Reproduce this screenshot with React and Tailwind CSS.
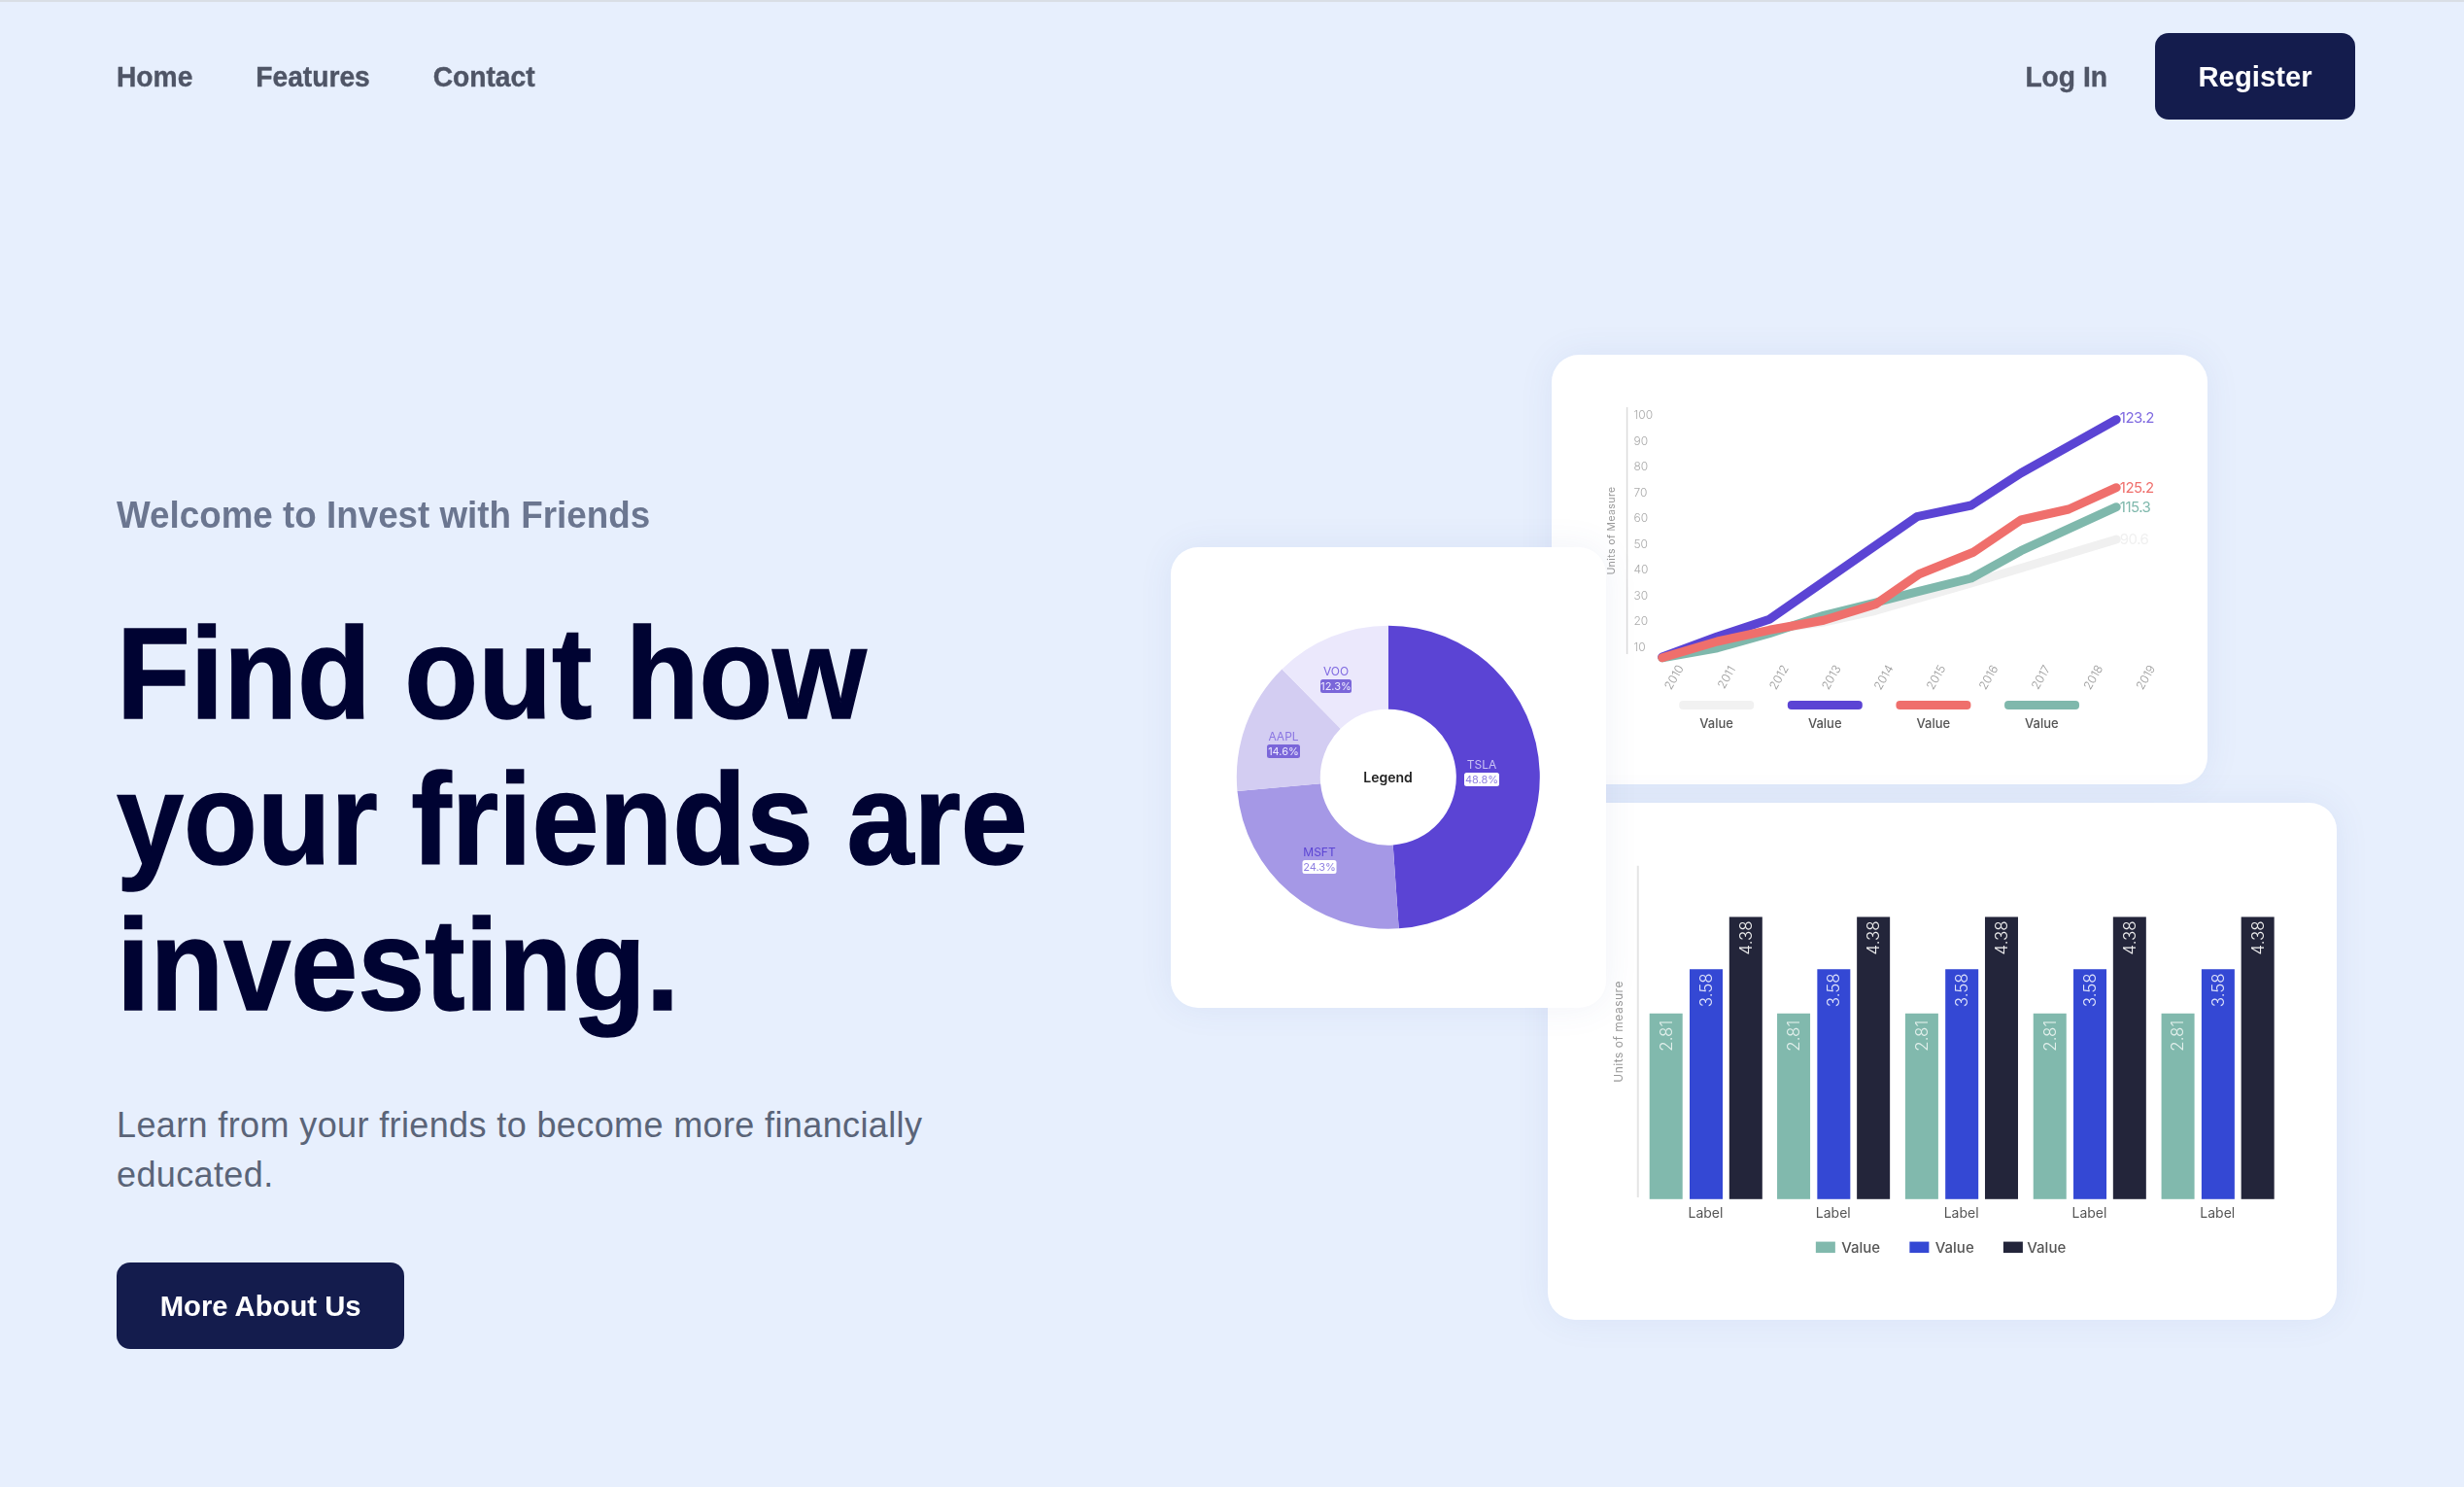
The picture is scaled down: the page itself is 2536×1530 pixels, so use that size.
import React from "react"

const sans = "font-['Liberation_Sans',Arial,sans-serif]"
const chartFont = "Inter, 'Noto Sans', sans-serif"

// line chart points are read from the reference crop, then mapped into card space
const lx = x => x / 2.24 - 17
const ly = y => y / 3 - 15
const linePts = pts => pts.map(([x, y]) => `${lx(x).toFixed(1)},${ly(y).toFixed(1)}`).join(" ")

const lines = [
    { color: "#f0f0f0", pts: [[293, 980], [420, 930], [540, 895], [665, 870], [785, 835], [1005, 750], [1340, 615]] },
    { color: "#7fb8ac", pts: [[293, 980], [420, 950], [540, 905], [665, 850], [785, 810], [885, 775], [1005, 735], [1120, 650], [1340, 515]] },
    { color: "#5b44d4", pts: [[293, 978], [420, 915], [540, 862], [880, 545], [1005, 510], [1120, 410], [1340, 245]] },
    { color: "#ef6f6c", pts: [[293, 980], [420, 930], [540, 895], [665, 865], [785, 815], [885, 722], [1010, 655], [1120, 555], [1230, 522], [1340, 455]] },
]

function LineChart() {
    const ticks = [100, 90, 80, 70, 60, 50, 40, 30, 20, 10]
    const years = [2010, 2011, 2012, 2013, 2014, 2015, 2016, 2017, 2018, 2019]
    const ends = [
        { t: "123.2", y: 240, c: "#7e68e0" },
        { t: "125.2", y: 455, c: "#ef6f6c" },
        { t: "115.3", y: 515, c: "#7fb8ac" },
        { t: "90.6", y: 615, c: "#f0f0f0" },
    ]
    const legend = [
        { x: 332, c: "#f1f1f1" },
        { x: 582, c: "#5b44d4" },
        { x: 832, c: "#ef6f6c" },
        { x: 1082, c: "#7fb8ac" },
    ]
    return (
        <svg viewBox="0 0 675 442" className="w-full h-full blur-[0.5px]" style={{ fontFamily: chartFont }}>
            <line x1="77.6" y1="54" x2="77.6" y2="308" stroke="#dcdcdc" strokeWidth="1.5" />
            {ticks.map((t, i) => (
                <text key={t} x="84.5" y={62.3 + i * 26.5 + 4} fontSize="12" fontWeight="300" fill="#aaa">{t}</text>
            ))}
            <text transform="translate(65 181) rotate(-90)" textAnchor="middle" fontSize="10.5" fill="#999" letterSpacing="0.4">Units of Measure</text>
            {lines.map(l => (
                <polyline key={l.color} points={linePts(l.pts)} fill="none" stroke={l.color} strokeWidth="9" strokeLinecap="round" strokeLinejoin="round" />
            ))}
            {ends.map(e => (
                <text key={e.t} x={lx(1348)} y={ly(e.y) + 5} fontSize="15" letterSpacing="-0.5" fill={e.c}>{e.t}</text>
            ))}
            {years.map((y, i) => (
                <text key={y} transform={`translate(${lx(322 + i * 120.8)} ${ly(1042)}) rotate(-60)`} textAnchor="middle" dominantBaseline="middle" fontSize="12" fontWeight="300" fill="#999">{y}</text>
            ))}
            {legend.map(l => (
                <g key={l.x}>
                    <rect x={lx(l.x)} y={ly(1113)} width="77" height="9" rx="4" fill={l.c} />
                    <text x={lx(l.x + 86)} y={ly(1182) + 5} textAnchor="middle" fontSize="13" fontWeight="500" fill="#555">Value</text>
                </g>
            ))}
        </svg>
    )
}

// donut slice between two clockwise angles measured from 12 o'clock
function slice(a0, a1, R, r) {
    const cx = 223.8, cy = 236.7
    const p = (a, rad) => {
        const t = (a * Math.PI) / 180
        return `${(cx + rad * Math.sin(t)).toFixed(2)} ${(cy - rad * Math.cos(t)).toFixed(2)}`
    }
    const big = a1 - a0 > 180 ? 1 : 0
    return `M${p(a0, R)} A${R} ${R} 0 ${big} 1 ${p(a1, R)} L${p(a1, r)} A${r} ${r} 0 ${big} 0 ${p(a0, r)} Z`
}

function PieChart() {
    const slices = [
        { a: [0, 176], c: "#5b44d4" },
        { a: [176, 264.7], c: "#a598e6" },
        { a: [264.7, 315.5], c: "#d3cdf2" },
        { a: [315.5, 360], c: "#ebe8fc" },
    ]
    const tags = [
        { n: "VOO", p: "12.3%", x: 170, y: 128, w: 32, lc: "#7e68e0", bg: "#7a66d9", tc: "#ece9ff" },
        { n: "AAPL", p: "14.6%", x: 116, y: 195, w: 34, lc: "#8a76e2", bg: "#7a66d9", tc: "#ece9ff" },
        { n: "TSLA", p: "48.8%", x: 320, y: 224, w: 36, lc: "#c9c2f5", bg: "#ffffff", tc: "#8f80e2" },
        { n: "MSFT", p: "24.3%", x: 153, y: 314, w: 35, lc: "#5b44d4", bg: "#ffffff", tc: "#8f80e2" },
    ]
    return (
        <svg viewBox="0 0 448 474" className="w-full h-full blur-[0.4px]" style={{ fontFamily: chartFont }}>
            {slices.map(s => (
                <path key={s.c} d={slice(s.a[0], s.a[1], 156, 70)} fill={s.c} />
            ))}
            {tags.map(t => (
                <g key={t.n}>
                    <text x={t.x} y={t.y + 4} textAnchor="middle" fontSize="12" fill={t.lc}>{t.n}</text>
                    <rect x={t.x - t.w / 2} y={t.y + 8} width={t.w} height="14" rx="2.5" fill={t.bg} />
                    <text x={t.x} y={t.y + 19} textAnchor="middle" fontSize="11" fill={t.tc}>{t.p}</text>
                </g>
            ))}
            <text x="223.5" y="242" textAnchor="middle" fontSize="14" fontWeight="600" fill="#222">Legend</text>
        </svg>
    )
}

const bx = x => x / 2.01 + 47
const by = y => y / 2.9 - 6

function BarChart() {
    const groups = [116, 380, 645, 910, 1175]
    const bars = [
        { off: 0, top: 646, c: "#81b9ad", v: "2.81", tc: "#e3f0ec" },
        { off: 83, top: 514, c: "#3448d4", v: "3.58", tc: "#dfe3fa" },
        { off: 165, top: 358, c: "#23253a", v: "4.38", tc: "#eeeeee" },
    ]
    const legend = [
        { x: 460, tx: 513, c: "#81b9ad" },
        { x: 654, tx: 707, c: "#3448d4" },
        { x: 848, tx: 897, c: "#23253a" },
    ]
    return (
        <svg viewBox="0 0 812 532" className="w-full h-full blur-[0.5px]" style={{ fontFamily: chartFont }}>
            <line x1={bx(92)} y1={by(205)} x2={bx(92)} y2={by(1195)} stroke="#e5e5e5" strokeWidth="2" />
            <text transform={`translate(${bx(52) + 4} ${by(700)}) rotate(-90)`} textAnchor="middle" fontSize="12" fill="#999" letterSpacing="0.5">Units of measure</text>
            {groups.map(g => (
                <g key={g}>
                    {bars.map(b => (
                        <g key={b.off}>
                            <rect x={bx(g + b.off)} y={by(b.top)} width="34" height={by(1200) - by(b.top)} fill={b.c} />
                            <text transform={`translate(${bx(g + b.off + 34) + 6} ${by(b.top) + 39}) rotate(-90)`} fontSize="17" fontWeight="300" fill={b.tc} textAnchor="start">{b.v}</text>
                        </g>
                    ))}
                    <text x={bx(g + 116)} y={by(1240) + 5} textAnchor="middle" fontSize="14" fill="#555">Label</text>
                </g>
            ))}
            {legend.map(l => (
                <g key={l.x}>
                    <rect x={bx(l.x)} y={by(1327)} width="20" height="11.5" fill={l.c} />
                    <text x={bx(l.tx)} y={by(1343) + 5.5} fontSize="15" fontWeight="500" fill="#555">Value</text>
                </g>
            ))}
        </svg>
    )
}

export default function App() {
    return (
        <div className={`${sans} relative w-full h-[1530px] bg-[#e7effd] border-t-2 border-[#d9dee5] overflow-hidden`}>
            {/* NAV */}
            <header className="flex items-center justify-between pl-[120px] pr-[112px] pt-[32px]">
                <nav className="flex gap-[69px] origin-left scale-x-[0.94] text-[30px] font-bold text-[#4f5566] [-webkit-text-stroke:0.4px_#4f5566]">
                    <a>Home</a>
                    <a>Features</a>
                    <a>Contact</a>
                </nav>
                <div className="flex items-center gap-[49px]">
                    <a className="origin-right scale-x-[0.94] text-[30px] font-bold text-[#4f5566] [-webkit-text-stroke:0.4px_#4f5566]">Log In</a>
                    <a className="flex items-center justify-center w-[206px] h-[89px] rounded-[14px] bg-[#141c4d] text-[30px] font-bold text-white">
                        <span className="scale-x-[0.975]">Register</span>
                    </a>
                </div>
            </header>

            {/* HERO */}
            <main className="flex">
                <section className="w-[1085px] shrink-0 pl-[120px] pt-[385px]">
                    <p className="origin-left scale-x-[0.968] whitespace-nowrap text-[38px] leading-[44px] font-bold text-[#6b7690]">Welcome to Invest with Friends</p>
                    <h1 className="mt-[66px] origin-left scale-x-[0.926] whitespace-nowrap text-[134px] leading-[150px] font-bold text-[#000332] [-webkit-text-stroke:1.5px_#000332]">
                        Find out how<br />your friends are<br />investing.
                    </h1>
                    <p className="mt-[64px] w-[860px] text-[36px] leading-[51px] tracking-[0.38px] text-[#5a6478]">
                        Learn from your friends to become more financially educated.
                    </p>
                    <a className="mt-[65px] flex items-center justify-center w-[296px] h-[89px] rounded-[14px] bg-[#141c4d] text-[30px] font-bold text-white">
                        <span className="scale-x-[0.975]">More About Us</span>
                    </a>
                </section>

                {/* CHART CARDS, overlapping on a free canvas */}
                <section className="relative flex-1 h-[1405px]">
                    <div className="absolute left-[512px] top-[242px] w-[675px] h-[442px] rounded-[28px] bg-white shadow-[0_0_36px_rgba(60,90,170,0.08)]">
                        <LineChart />
                    </div>
                    <div className="absolute left-[508px] top-[703px] w-[812px] h-[532px] rounded-[28px] bg-white shadow-[0_0_36px_rgba(60,90,170,0.08)]">
                        <BarChart />
                    </div>
                    <div className="absolute left-[120px] top-[440px] w-[448px] h-[474px] rounded-[28px] bg-white shadow-[0_0_36px_rgba(60,90,170,0.08)]">
                        <PieChart />
                    </div>
                </section>
            </main>
        </div>
    )
}
